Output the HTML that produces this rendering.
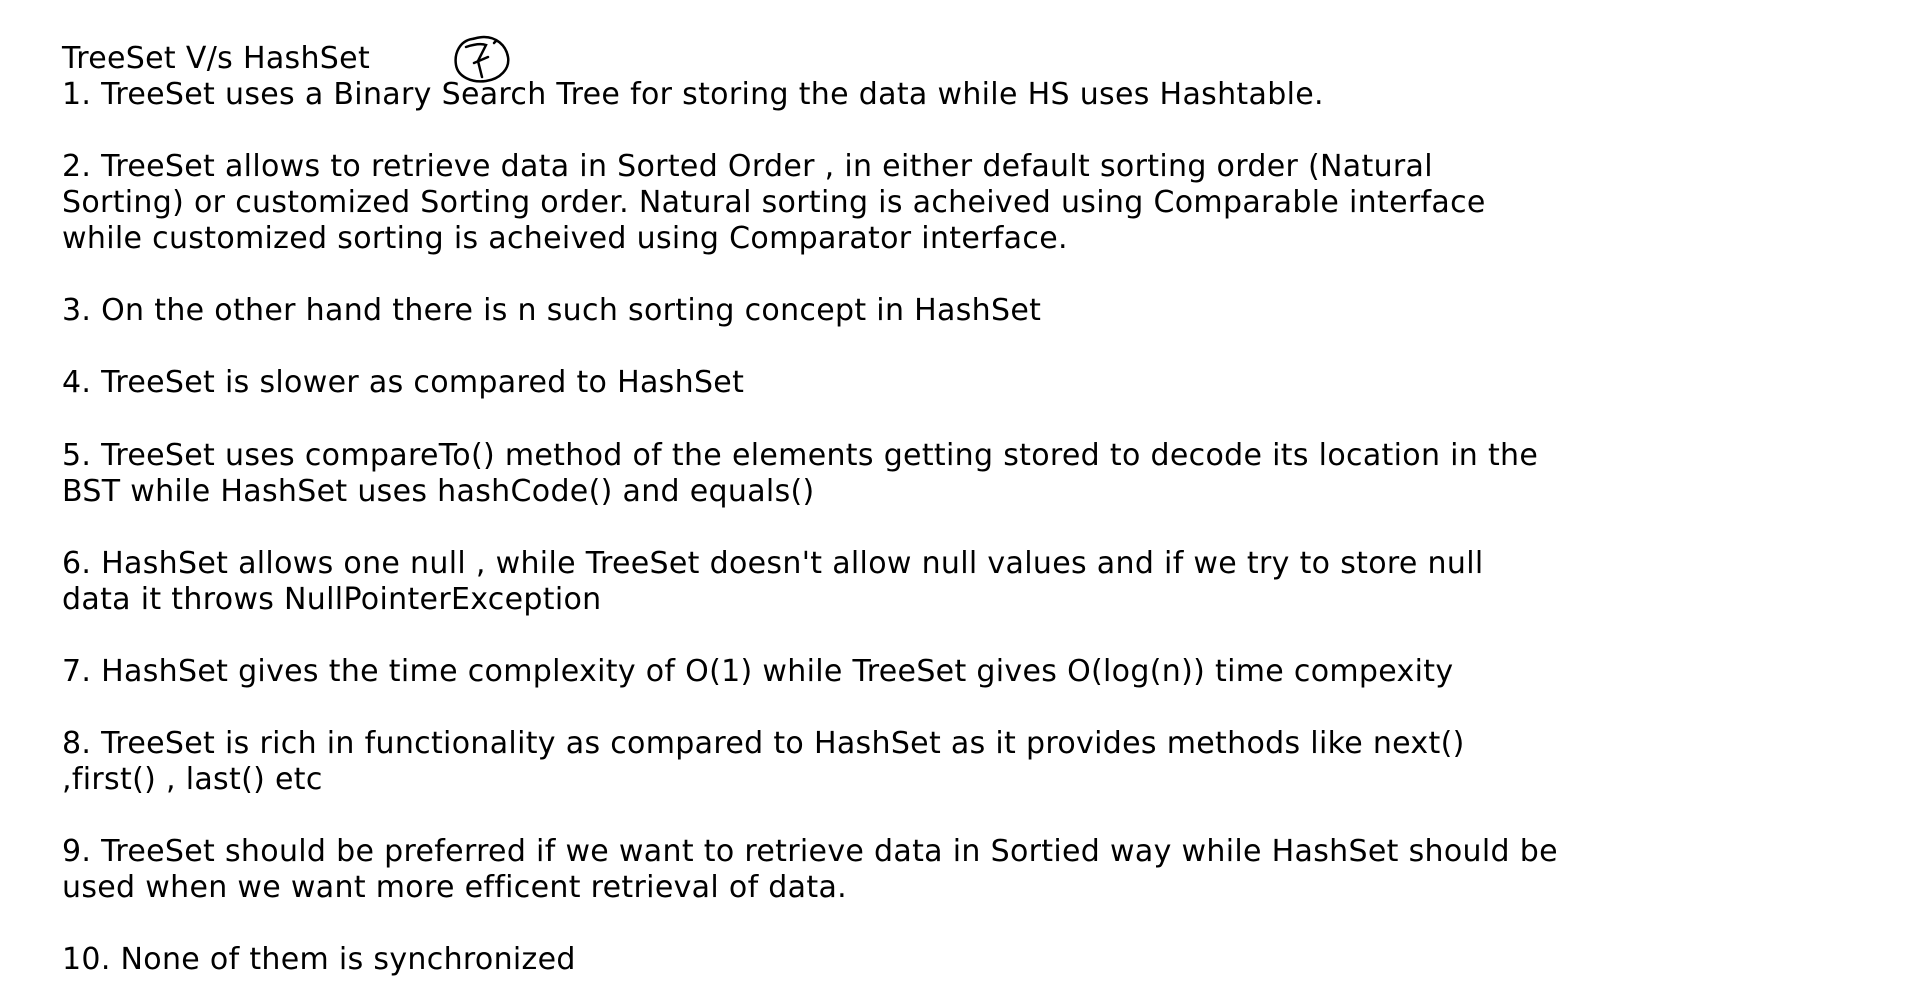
<!DOCTYPE html>
<html><head><meta charset="utf-8"><style>
html,body{margin:0;padding:0;background:#fff;width:1920px;height:1001px;overflow:hidden}
#t{position:absolute;left:62px;top:41px;font-family:"DejaVu Sans","Liberation Sans",sans-serif;font-size:30px;line-height:36.05px;color:#000;white-space:pre;letter-spacing:0.32px}
svg{position:absolute;left:450px;top:33px}
</style></head><body>
<div id="t">TreeSet V/s HashSet
1. TreeSet uses a Binary Search Tree for storing the data while HS uses Hashtable.

2. TreeSet allows to retrieve data in Sorted Order , in either default sorting order (Natural
Sorting) or customized Sorting order. Natural sorting is acheived using Comparable interface
while customized sorting is acheived using Comparator interface.

3. On the other hand there is n such sorting concept in HashSet

4. TreeSet is slower as compared to HashSet

5. TreeSet uses compareTo() method of the elements getting stored to decode its location in the
BST while HashSet uses hashCode() and equals()

6. HashSet allows one null , while TreeSet doesn't allow null values and if we try to store null
data it throws NullPointerException

7. HashSet gives the time complexity of O(1) while TreeSet gives O(log(n)) time compexity

8. TreeSet is rich in functionality as compared to HashSet as it provides methods like next()
,first() , last() etc

9. TreeSet should be preferred if we want to retrieve data in Sortied way while HashSet should be
used when we want more efficent retrieval of data.

10. None of them is synchronized</div>
<svg width="64" height="56" viewBox="0 0 64 56" fill="none" stroke="#000" stroke-width="2.5" stroke-linecap="round">
<path d="M22 6 C10 8 4 20 6 32 C8 44 22 50 36 48 C50 46 60 36 58 24 C56 12 46 4 34 4 C28 4 24 6 22 6"/>
<path d="M16 14 C22 12 30 10 36 12 L28 28 L32 44"/>
<path d="M24 30 L38 24"/>
<path d="M44 10 L46 8"/>
</svg>
</body></html>
